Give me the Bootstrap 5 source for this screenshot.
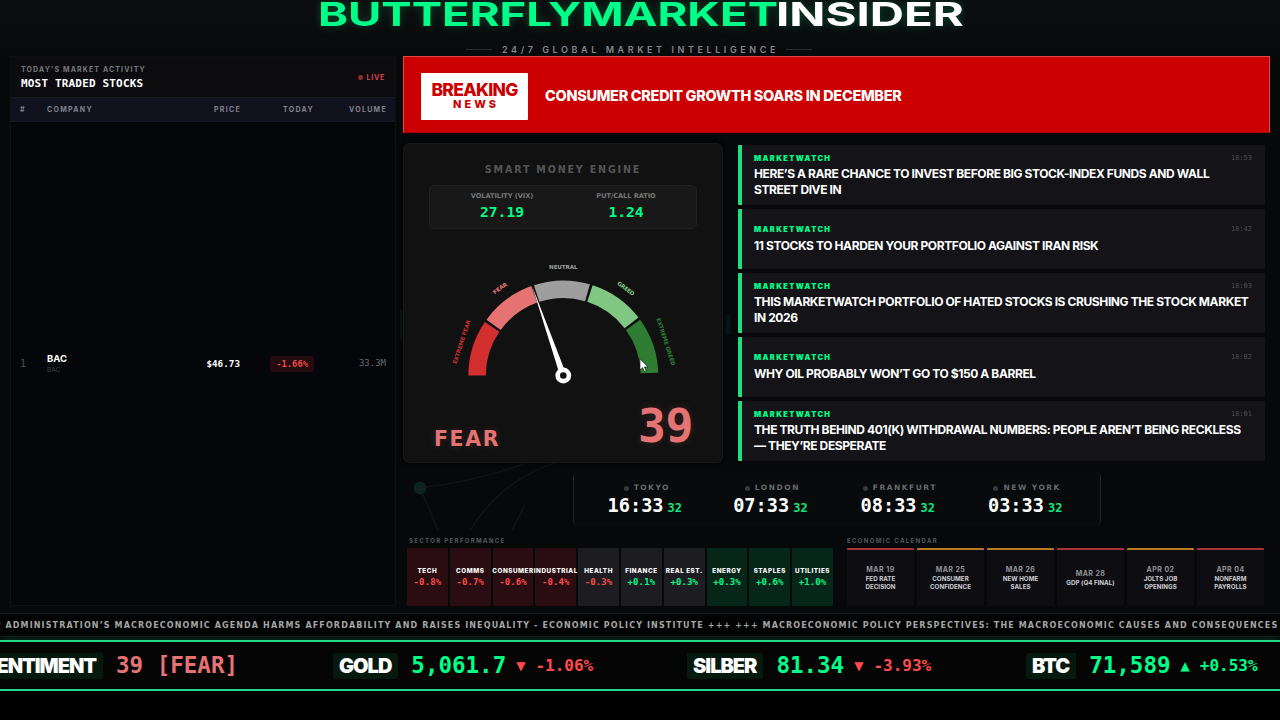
<!DOCTYPE html>
<html lang="en" data-bs-theme="dark">
<head>
<meta charset="utf-8">
<meta name="viewport" content="width=device-width, initial-scale=1">
<title>ButterflyMarketInsider</title>
<link href="https://cdn.jsdelivr.net/npm/bootstrap@5.3.0/dist/css/bootstrap.min.css" rel="stylesheet">
<style>
:root{--mint:#0f8;--dj:"DejaVu Sans",sans-serif;--mono:"DejaVu Sans Mono",monospace}
body{width:1280px;height:720px;background:#06080a;color:#fff;font-family:Inter,sans-serif;line-height:1;overflow:hidden}
.mono{font-family:var(--mono)}.dj{font-family:var(--dj)}
.mint{color:var(--mint)}.loss{color:#ff4b4b}
.backdrop{left:400px;top:100px;z-index:-1}
.masthead{height:56px;background:linear-gradient(#0b0c0e,#080a0c)}
.masthead svg{display:block;overflow:visible;filter:drop-shadow(0 0 5px rgba(0,255,136,.25))}
.strap{font-size:9px;font-weight:600;color:#85878a;letter-spacing:3.58px;gap:10px;height:10px;margin-top:9px;padding-right:2px}
.strap span{margin-right:-3px}
.strap i{width:26px;height:1px;background:#2b2e31}
.stage{height:557px;padding:0 10px 7px 10px;gap:7px}
.stocks{width:386px;background:#05060a;border:1px solid #0f1014}
.stocks-head{height:40px;background:#0c0c0f;padding:1px 10px 0 10px}
.kicker{font-size:7px;font-weight:700;color:#77787c;letter-spacing:1.13px}
.stocks-title{font-size:11px;font-weight:700;letter-spacing:.17px;margin-top:5px}
.live{font-size:7px;font-weight:700;color:#d8424a;letter-spacing:.8px;gap:3px}
.live i{width:5px;height:5px;border-radius:50%;background:#8c2b31}
.trow{display:grid;grid-template-columns:27px 120px 73px 73px 73px;padding:0 9px;align-items:center}
.trow>*:nth-child(n+3){text-align:right}
.thead-bar{height:25px;background:#12121f;border-top:1px solid #191924;border-bottom:1px solid #191924;font-size:7px;font-weight:700;color:#82838d;letter-spacing:1.3px}
.thead-bar span:nth-child(n+3){margin-right:-1px}
.chg{display:inline-block;background:#230b0f;color:#f04a4a;font-size:8.8px;font-weight:700;padding:4px 6px;border-radius:2px;margin:0 -1px 2px 0}
.breaking{height:77px;background:#c00;border:1px solid #e0474d;border-bottom-color:#b00000;padding:0 17px}
.flag{width:107px;height:47px;background:#fff;color:#c00;border-radius:1px;margin-bottom:-4px;padding-bottom:2px}
.flag b{font-size:17.5px;font-weight:800;letter-spacing:-.7px}
.flag span{font-size:11px;font-weight:800;letter-spacing:3px;margin:1px -3px 0 0}
.alert-line{font-size:14.5px;font-weight:800;letter-spacing:-.3px;margin:4px 0 0 17px}
.mid{margin-top:10px;gap:15px}
.engine{width:320px;height:320px;background:#111;border:1px solid #171918;border-radius:6px;box-shadow:0 0 5px #000}
.engine h2{font-size:9.6px;font-weight:700;color:#555;letter-spacing:1.8px;margin:21px 0 0;line-height:10px}
.ratios{width:268px;height:44px;margin:10px auto 0;background:#181818;border:1px solid #202020;border-radius:5px;padding:0 8px 1px 10px}
.ratios small{font-size:6.6px;font-weight:700;color:#777;display:block;margin-bottom:5px;font-family:var(--dj);letter-spacing:-.05px}
.ratios b{font-size:14.6px;display:block}
.verdict{padding:0 29px 0 30px;margin-top:6px;text-shadow:0 0 9px rgba(229,115,115,.18)}
.mood{font-size:20.5px;letter-spacing:1.6px;padding-bottom:7px}
.score{font-size:46.5px;line-height:50px;letter-spacing:-.5px;margin-bottom:5px}
.headline{width:527px;height:60px;background:#131318;border-left:4px solid #20df82;border-radius:1px;padding:2px 13px 0 12px}
.headline+.headline{margin-top:4px}
.src{font-size:7.5px;font-weight:900;letter-spacing:1.35px;color:var(--mint)}
.stamp{font-size:7px;color:#515156}
.headline p{font-size:12px;font-weight:700;line-height:15.6px;margin:4px 0 0;letter-spacing:-.4px;white-space:nowrap}
.clocks{width:528px;height:54px;margin:9px 0 0 170px;border:solid #1e2223;border-width:0 1px;border-radius:5px;background:#080a0b;padding:2px 12px 0 8px}
.city{font-size:7.5px;font-weight:700;color:#67696c;letter-spacing:1.5px;gap:5px;padding-left:4px}
.city i{width:5px;height:5px;border-radius:50%;background:#36383a}
.clock .mono{margin-top:5px}
.clock b{font-size:18.6px}.clock em{font-style:normal;font-weight:700;font-size:12px;margin-left:4px;color:#12e47f}
.section-cap{font-size:6px;font-weight:700;color:#56585c;letter-spacing:1.36px;height:6px;margin-bottom:4px;white-space:nowrap}
.tile{flex:1 1 0;min-width:0;height:58px;background:#1c1c21;white-space:nowrap;border-radius:1px;padding-top:1px}
.tile.dn{background:#2a0d12}.tile.up{background:#06261a}
.tile span{font-size:6.3px;font-weight:800;letter-spacing:.55px}
.tile b{font-size:9px;letter-spacing:.1px;margin-top:3px}
.event{flex:1 1 0;height:58px;background:#0e0e12;border-top:2px solid #a8323c;border-radius:1px;text-align:center}
.event.mid-imp{border-color:#b57b27}
.event b{font-size:7px;font-weight:700;color:#929297;letter-spacing:.45px;margin-bottom:2px}
.event span{font-size:6.2px;font-weight:700;line-height:7.2px;color:#cfcfd2;letter-spacing:.03px}
.wire{height:24px;background:#020303;border:solid #151817;border-width:1px 0;overflow:hidden;white-space:nowrap;font-size:8px;font-weight:700;letter-spacing:1.13px;color:#a5a5a5;padding-top:1px}
.wire div{margin-left:-36px}
.quotes{height:51px;margin-top:3px;border:solid #21d884;border-width:2px 0;background:#060505;box-shadow:0 0 8px rgba(0,255,136,.22);display:grid;grid-template-columns:333px 354px 339px 254px;overflow:visible;white-space:nowrap}
.quote{display:flex;align-items:center;min-width:0}
.sym{height:26px;line-height:26px;background:#06190f;padding:0 7px 0 6px;font-size:20px;font-weight:900;letter-spacing:-1px;border-radius:2px;margin-right:13px}
.px{font-size:22.5px;font-weight:700}.mv{font-size:16px;font-weight:700}
.tri{font-size:12px;margin:0 10px 0 10px}
.senti{color:#e57373}
.floor{height:30px;background:#000}
</style>
</head>
<body class="position-relative">
<svg class="backdrop position-absolute" width="880" height="500" fill="none" stroke="#10241f" stroke-width="1.2" aria-hidden="true">
<circle cx="20" cy="388" r="6.5" fill="#0e241c" stroke="none"/>
<path opacity=".6" d="M20 388L38 430M20 388Q90 380 160 350M70 430Q105 375 165 360M112 430L125 405" />
<path opacity=".18" d="M0 210v30M328 215v20" stroke="#0d5b52" stroke-width="5"/>
</svg>
<header class="masthead">
<svg width="1280" height="35" viewBox="0 0 1280 35" font-family="Inter,sans-serif" font-weight="700" font-size="33.3"><text x="318" y="26" textLength="460" lengthAdjust="spacingAndGlyphs" fill="#0f8">BUTTERFLYMARKET</text><text x="776" y="26" textLength="188" lengthAdjust="spacingAndGlyphs" fill="#fff">INSIDER</text></svg>
<div class="strap d-flex justify-content-center align-items-center"><i></i><span>24/7 GLOBAL MARKET INTELLIGENCE</span><i></i></div>
</header>
<main class="stage d-flex">
<section class="stocks d-flex flex-column">
<div class="stocks-head d-flex justify-content-between align-items-center">
<div><div class="kicker">TODAY'S MARKET ACTIVITY</div><div class="stocks-title mono">MOST TRADED STOCKS</div></div>
<div class="live d-flex align-items-center"><i></i>LIVE</div>
</div>
<div class="trow thead-bar"><span>#</span><span>COMPANY</span><span>PRICE</span><span>TODAY</span><span>VOLUME</span></div>
<div class="trow flex-grow-1">
<span class="mono" style="font-size:10px;color:#4a4b50">1</span>
<span><span class="d-block fw-bold" style="font-size:9.5px">BAC</span><span class="d-block" style="font-size:6.5px;color:#3e3f44;margin-top:4px">BAC</span></span>
<span class="mono fw-bold" style="font-size:9.3px">$46.73</span>
<span><span class="chg mono">-1.66%</span></span>
<span class="mono" style="font-size:9px;color:#66676c">33.3M</span>
</div>
</section>
<section class="flex-grow-1">
<div class="breaking d-flex align-items-center">
<div class="flag d-flex flex-column align-items-center justify-content-center"><b>BREAKING</b><span>NEWS</span></div>
<div class="alert-line">CONSUMER CREDIT GROWTH SOARS IN DECEMBER</div>
</div>
<div class="mid d-flex">
<div class="engine d-flex flex-column">
<h2 class="dj text-center">SMART MONEY ENGINE</h2>
<div class="ratios row g-0 align-items-center text-center">
<div class="col-6"><small>VOLATILITY (VIX)</small><b class="mono mint">27.19</b></div>
<div class="col-6"><small>PUT/CALL RATIO</small><b class="mono mint">1.24</b></div>
</div>
<svg width="318" height="160" viewBox="404 235 318 160" style="margin-top:6px" font-family="DejaVu Sans,sans-serif" font-weight="700" font-size="5.6" text-anchor="middle">
<g id="arcs" fill="none" stroke-width="17.5"></g>
<polygon points="532.3,286.5 560.3,376.5 566.3,374.5" fill="#fff"/>
<circle cx="563.3" cy="375.5" r="5.6" fill="#111" stroke="#fff" stroke-width="4.6"/>
<text x="563.3" y="269.3" textLength="28.5" fill="#9e9e9e">NEUTRAL</text>
<text transform="translate(501.3 289.8) rotate(-36)" textLength="16" fill="#e57373">FEAR</text>
<text transform="translate(624.8 290.2) rotate(36)" textLength="20" fill="#81c784">GREED</text>
<text transform="translate(463.4 342.5) rotate(-72)" textLength="46" fill="#c62f2f">EXTREME FEAR</text>
<text transform="translate(664 342.5) rotate(72)" textLength="50" fill="#2e7d32">EXTREME GREED</text>
<path d="M640 358.8v11.2l2.6-2.4 1.8 4 1.8-.9-1.8-3.8h3.5z" fill="#fff" stroke="#111" stroke-width=".6"/>
</svg>
<div class="verdict d-flex justify-content-between align-items-end senti"><b class="mood dj">FEAR</b><b class="score mono">39</b></div>
</div>
<div style="padding-top:2px">
<article class="headline d-flex flex-column justify-content-center"><div class="d-flex justify-content-between"><span class="src">MARKETWATCH</span><span class="stamp mono">18:53</span></div><p>HERE’S A RARE CHANCE TO INVEST BEFORE BIG STOCK-INDEX FUNDS AND WALL<br>STREET DIVE IN</p></article>
<article class="headline d-flex flex-column justify-content-center"><div class="d-flex justify-content-between"><span class="src">MARKETWATCH</span><span class="stamp mono">18:42</span></div><p>11 STOCKS TO HARDEN YOUR PORTFOLIO AGAINST IRAN RISK</p></article>
<article class="headline d-flex flex-column justify-content-center"><div class="d-flex justify-content-between"><span class="src">MARKETWATCH</span><span class="stamp mono">18:03</span></div><p>THIS MARKETWATCH PORTFOLIO OF HATED STOCKS IS CRUSHING THE STOCK MARKET<br>IN 2026</p></article>
<article class="headline d-flex flex-column justify-content-center"><div class="d-flex justify-content-between"><span class="src">MARKETWATCH</span><span class="stamp mono">18:02</span></div><p>WHY OIL PROBABLY WON’T GO TO $150 A BARREL</p></article>
<article class="headline d-flex flex-column justify-content-center"><div class="d-flex justify-content-between"><span class="src">MARKETWATCH</span><span class="stamp mono">18:01</span></div><p>THE TRUTH BEHIND 401(K) WITHDRAWAL NUMBERS: PEOPLE AREN’T BEING RECKLESS<br>— THEY’RE DESPERATE</p></article>
</div>
</div>
<div class="clocks d-flex align-items-center justify-content-around text-center">
<div class="clock"><div class="city dj d-flex justify-content-center align-items-center"><i></i>TOKYO</div><div class="mono text-nowrap"><b>16:33</b><em>32</em></div></div>
<div class="clock"><div class="city dj d-flex justify-content-center align-items-center"><i></i>LONDON</div><div class="mono text-nowrap"><b>07:33</b><em>32</em></div></div>
<div class="clock"><div class="city dj d-flex justify-content-center align-items-center"><i></i>FRANKFURT</div><div class="mono text-nowrap"><b>08:33</b><em>32</em></div></div>
<div class="clock"><div class="city dj d-flex justify-content-center align-items-center"><i></i>NEW YORK</div><div class="mono text-nowrap"><b>03:33</b><em>32</em></div></div>
</div>
<div class="d-flex" style="padding:12px 6px 0 4px;gap:14px">
<div style="width:426px"><div class="section-cap" style="padding-left:2px">SECTOR PERFORMANCE</div><div class="d-flex" id="sectors" style="gap:2px"></div></div>
<div style="width:417px"><div class="section-cap">ECONOMIC CALENDAR</div><div class="d-flex" id="events" style="gap:3px"></div></div>
</div>
</section>
</main>
<div class="wire dj d-flex align-items-center"><div>TRUMP ADMINISTRATION’S MACROECONOMIC AGENDA HARMS AFFORDABILITY AND RAISES INEQUALITY - ECONOMIC POLICY INSTITUTE +++ +++ MACROECONOMIC POLICY PERSPECTIVES: THE MACROECONOMIC CAUSES AND CONSEQUENCES</div></div>
<div class="quotes">
<div class="quote justify-content-end" style="padding-right:95px"><span class="sym">SENTIMENT</span><span class="px mono senti">39 [FEAR]</span></div>
<div class="quote"><span class="sym">GOLD</span><span class="px mono mint">5,061.7</span><span class="tri dj loss">▼</span><span class="mv mono loss">-1.06%</span></div>
<div class="quote"><span class="sym">SILBER</span><span class="px mono mint">81.34</span><span class="tri dj loss">▼</span><span class="mv mono loss">-3.93%</span></div>
<div class="quote"><span class="sym">BTC</span><span class="px mono mint">71,589</span><span class="tri dj mint">▲</span><span class="mv mono mint">+0.53%</span></div>
</div>
<div class="floor"></div>
<script src="https://cdn.jsdelivr.net/npm/bootstrap@5.3.0/dist/js/bootstrap.bundle.min.js"></script>
<script>
const sectors=[["TECH",-.8],["COMMS",-.7],["CONSUMER",-.6],["INDUSTRIAL",-.4],["HEALTH",-.3],["FINANCE",.1],["REAL EST.",.3],["ENERGY",.3],["STAPLES",.6],["UTILITIES",1]];
document.getElementById("sectors").innerHTML=sectors.map(([n,v],i)=>`<div class="tile d-flex flex-column align-items-center justify-content-center ${i<4?"dn":i>6?"up":""}"><span>${n}</span><b class="mono ${v<0?"loss":"mint"}">${v>0?"+":""}${v.toFixed(1)}%</b></div>`).join("");
const events=[["MAR 19","FED RATE<br>DECISION",0],["MAR 25","CONSUMER<br>CONFIDENCE",1],["MAR 26","NEW HOME<br>SALES",1],["MAR 28","GDP (Q4 FINAL)",0],["APR 02","JOLTS JOB<br>OPENINGS",1],["APR 04","NONFARM<br>PAYROLLS",0]];
document.getElementById("events").innerHTML=events.map(([d,t,m])=>`<div class="event d-flex flex-column justify-content-center ${m?"mid-imp":""}"><b>${d}</b><span>${t}</span></div>`).join("");
const pt=a=>{const r=a*Math.PI/180;return (563.3-86.2*Math.cos(r)).toFixed(2)+" "+(375.5-86.2*Math.sin(r)).toFixed(2)};
document.getElementById("arcs").innerHTML=["#d32f2f","#e57373","#9e9e9e","#81c784","#2e7d32"].map((c,i)=>`<path stroke="${c}" d="M${pt(i*36)}A86.2 86.2 0 0 1 ${pt(i*36+34.3)}"/>`).join("");
</script>
</body>
</html>
